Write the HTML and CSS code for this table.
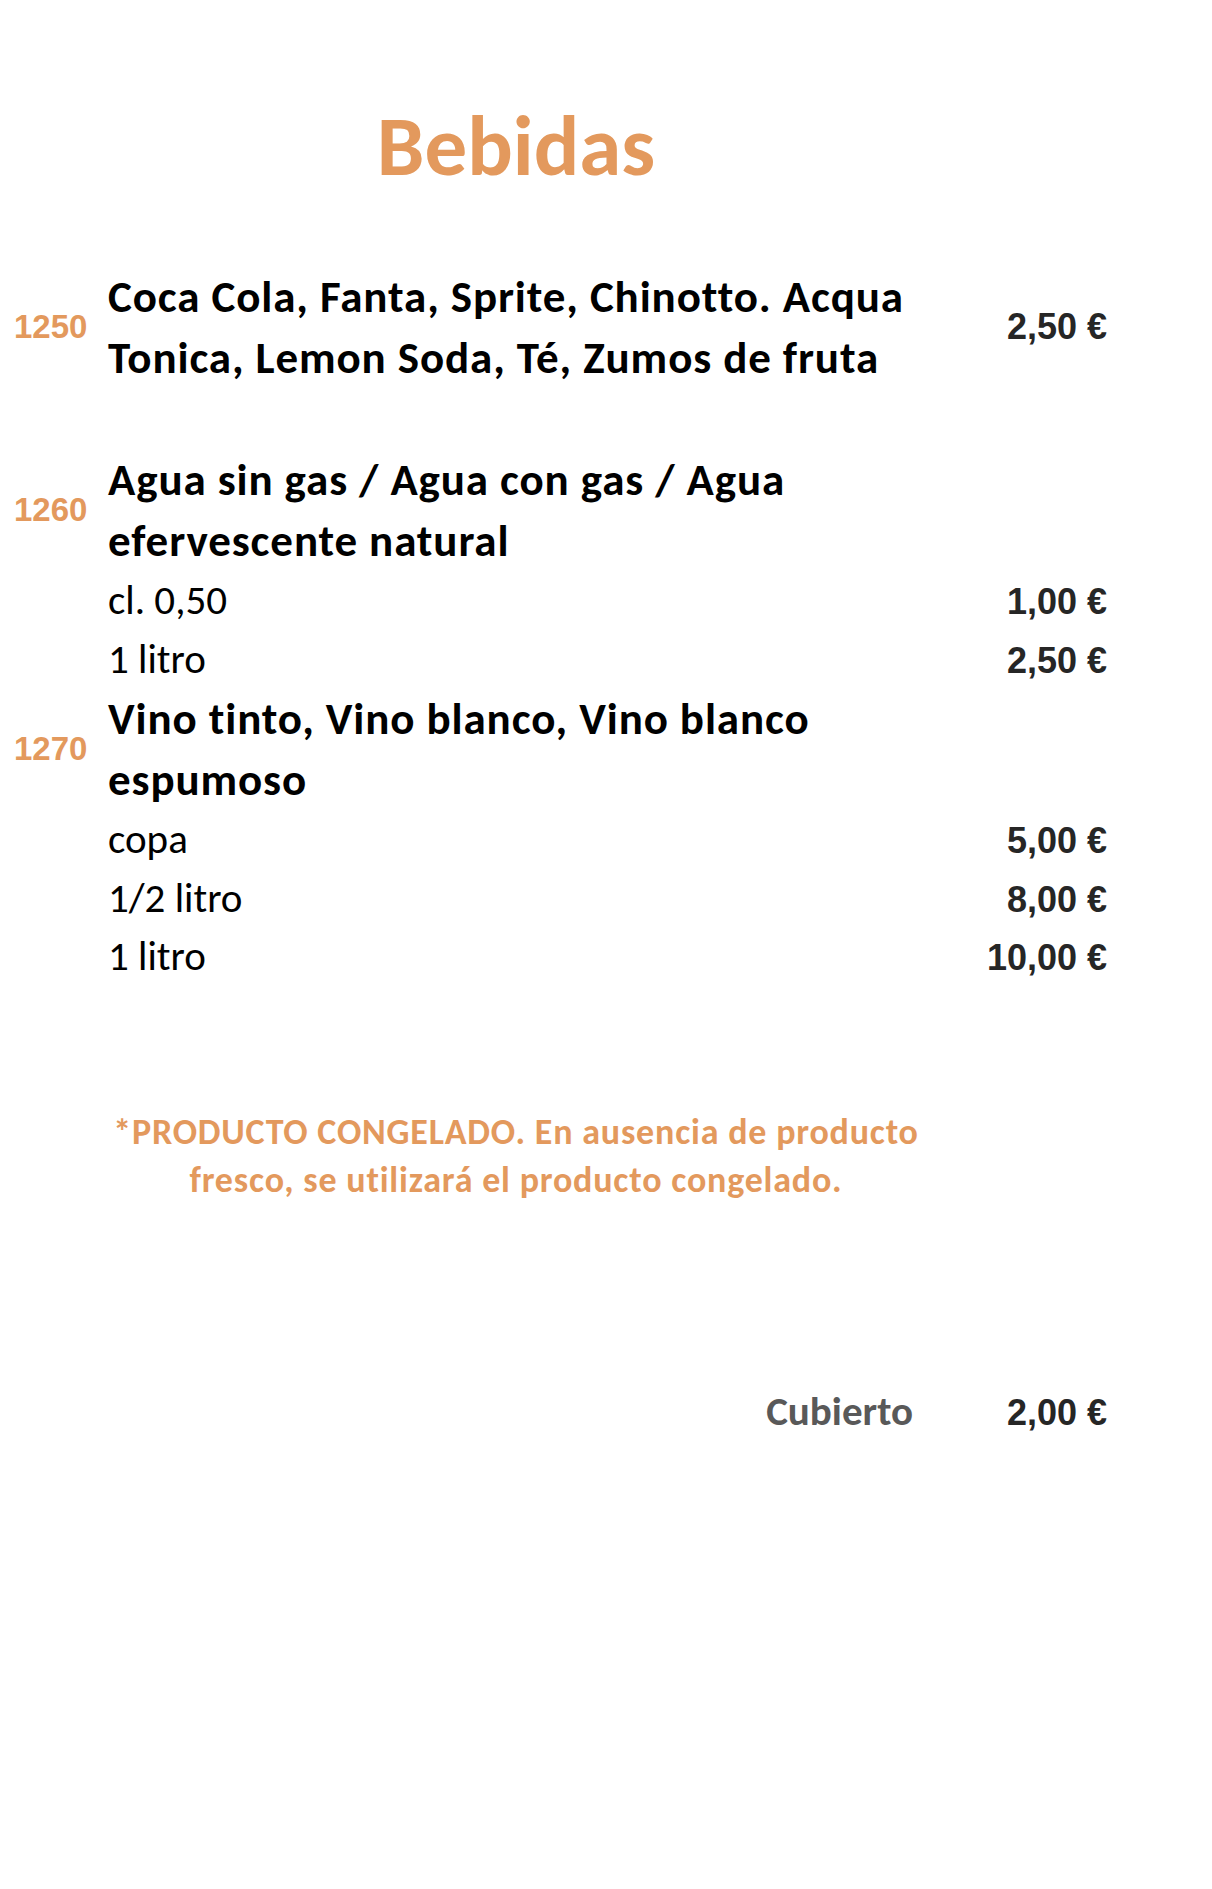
FILE: index.html
```html
<!DOCTYPE html>
<html lang="es">
<head>
    <meta charset="UTF-8">
    <title>Bebidas</title>
    <link rel="stylesheet" href="styles.css">
</head>
<body>
    <div class="carta">
        <h1 class="titulo">Bebidas</h1>

        <!-- Lista de bebidas -->
        <div class="lista">
            <div class="codigo">1250</div>
            <div class="plato">Coca Cola, Fanta, Sprite, Chinotto. Acqua<br>Tonica, Lemon Soda, Té, Zumos de fruta</div>
            <div class="precio centro">2,50 €</div>

            <div class="hueco"></div>

            <div class="codigo">1260</div>
            <div class="plato">Agua sin gas / Agua con gas / Agua<br>efervescente natural</div>
            <div class="precio"></div>
            <div class="medida">cl. 0,50</div>
            <div class="precio">1,00 €</div>
            <div class="medida">1 litro</div>
            <div class="precio">2,50 €</div>

            <div class="codigo">1270</div>
            <div class="plato">Vino tinto, Vino blanco, Vino blanco<br>espumoso</div>
            <div class="precio"></div>
            <div class="medida">copa</div>
            <div class="precio">5,00 €</div>
            <div class="medida">1/2 litro</div>
            <div class="precio">8,00 €</div>
            <div class="medida">1 litro</div>
            <div class="precio">10,00 €</div>
        </div>

        <p class="nota">*PRODUCTO CONGELADO. En ausencia de producto<br>fresco, se utilizará el producto congelado.</p>

        <div class="lista cubierto">
            <div class="medida etiqueta">Cubierto</div>
            <div class="precio">2,00 €</div>
        </div>
    </div>
</body>
</html>
```

FILE: styles.css
```css
* { box-sizing: border-box; margin: 0; padding: 0; }
body {
    font-family: Carlito, Calibri, Lato, sans-serif;
    background-color: #fff;
    color: #000;
}

.carta { width: 1093px; margin-left: 14px; padding-top: 95px; }
.titulo { font-size: 85px; line-height: 103px; font-weight: bold; color: #e3995d; text-align: center; padding-right: 89px; }

.lista { display: grid; grid-template-columns: 94px 1fr 140px; align-items: baseline; margin-top: 68px; }
.codigo { grid-column: 1; align-self: center; font-family: "Liberation Sans", Arial, sans-serif; font-weight: bold; font-size: 33px; color: #e3995d; }
.plato { grid-column: 2; font-size: 45px; line-height: 61px; letter-spacing: 0.9px; font-weight: bold; }
.medida { grid-column: 2; font-size: 41px; line-height: 58.5px; }
.precio { grid-column: 3; text-align: right; font-family: "Liberation Sans", Arial, sans-serif; font-weight: bold; font-size: 36px; color: #262626; }
.precio.centro { align-self: center; }
.hueco { grid-column: 1 / 4; height: 61px; }

.nota { margin-top: 122px; padding-right: 89px; text-align: center; font-size: 36px; line-height: 48px; letter-spacing: 0.8px; font-weight: bold; color: #e3995d; }

.cubierto { margin-top: 178px; }
.etiqueta { font-weight: bold; color: #595959; text-align: right; padding-right: 54px; }
```
